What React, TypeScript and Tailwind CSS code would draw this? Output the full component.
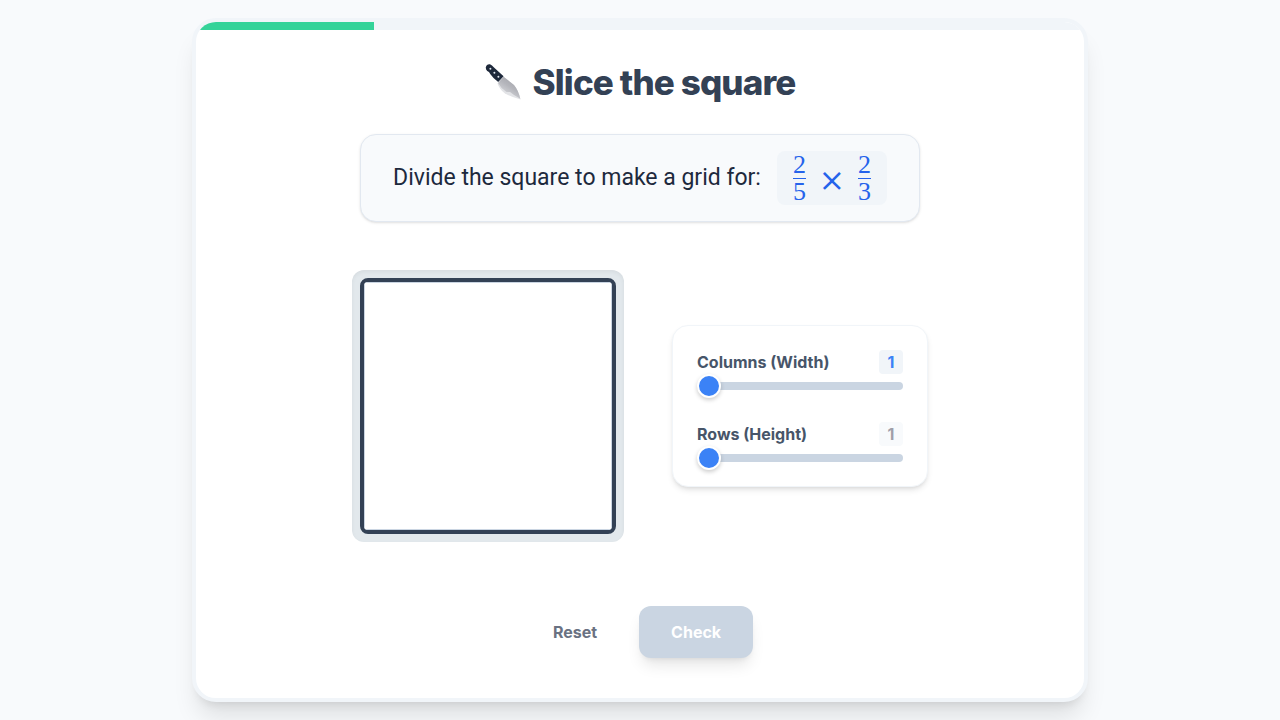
import { useState } from "react";

const KnifeIcon = () => (
  <svg className="h-9 w-9" viewBox="0 0 36 36" role="img" aria-label="Knife">
    <defs>
      <linearGradient id="blade" x1="0.2" y1="1" x2="0.8" y2="0.1">
        <stop offset="0.2" stopColor="#d3d4d8" />
        <stop offset="0.6" stopColor="#b4b5bb" />
        <stop offset="1" stopColor="#a3a4aa" />
      </linearGradient>
    </defs>
    <path d="M12.5 19.5 18.6 12.8 29 21Q33.5 26.5 35.6 35.4Q27 33.5 20 29.5Q14.5 25.5 12.5 19.5Z" fill="#e2e3e6" />
    <path d="M13 19 18.6 12.8 29 21Q33.5 26.5 35.3 34.8Q29 31.5 25 28L21.5 28Q16 24.5 13 19Z" fill="url(#blade)" />
    <path d="M.8 3.2Q1.6-.2 5 .2Q7 1.2 9 3.4L18.6 12.2 13.2 18Q8.6 14.8 5.4 10.2Q4.2 7.6 2.2 7Q.6 5.6.8 3.2Z" fill="#1e293b" />
    <circle cx="5.4" cy="4.8" r="1" fill="#e2e8f0" />
    <circle cx="9.4" cy="8.8" r="1" fill="#e2e8f0" />
    <circle cx="13.4" cy="12.8" r="1" fill="#e2e8f0" />
  </svg>
);

type FractionProps = { top: number; bottom: number };

const Fraction = ({ top, bottom }: FractionProps) => (
  <span className="flex w-[13px] flex-col items-center text-[26px] leading-[26px]">
    <span>{top}</span>
    <span className="h-px w-full bg-[#2563eb]" />
    <span>{bottom}</span>
  </span>
);

type SliderProps = {
  id: string;
  label: string;
  value: number;
  valueClass: string;
  onChange: (value: number) => void;
};

const Slider = ({ id, label, value, valueClass, onChange }: SliderProps) => (
  <div>
    <div className="mb-2 flex items-center justify-between font-bold text-[#475569]">
      <label htmlFor={id}>{label}</label>
      <output
        htmlFor={id}
        className={`min-w-6 rounded px-2 text-center ${valueClass}`}
      >
        {value}
      </output>
    </div>
    <input
      id={id}
      type="range"
      min={1}
      max={10}
      value={value}
      onChange={(e) => onChange(parseInt(e.target.value))}
      className="block h-2 w-full cursor-pointer appearance-none rounded-lg bg-slate-300 [&::-webkit-slider-thumb]:h-6 [&::-webkit-slider-thumb]:w-6 [&::-webkit-slider-thumb]:appearance-none [&::-webkit-slider-thumb]:rounded-full [&::-webkit-slider-thumb]:border-2 [&::-webkit-slider-thumb]:border-white [&::-webkit-slider-thumb]:bg-[#3b82f6] [&::-webkit-slider-thumb]:shadow-[0_2px_4px_rgba(0,0,0,0.2)]"
    />
  </div>
);

export default function App() {
  const [columns, setColumns] = useState(1);
  const [rows, setRows] = useState(1);

  const reset = () => {
    setColumns(1);
    setRows(1);
  };

  return (
    <div className="flex min-h-screen items-center justify-center bg-slate-50 px-4 font-['Inter',sans-serif] text-slate-800">
      <main className="w-full max-w-4xl overflow-hidden rounded-3xl border-4 border-slate-100 bg-white shadow-xl">
        <div className="h-2 bg-slate-100">
          <div className="h-full bg-[#34d399]" style={{ width: "20%" }} />
        </div>

        <div className="flex flex-col items-center px-10 pt-8 pb-10">
          <h1 className="mb-8 flex items-center gap-3 text-[35px] leading-10 font-extrabold tracking-tight text-[#334155]">
            <KnifeIcon />
            Slice the square
          </h1>

          <div className="mb-12 flex items-center gap-4 rounded-2xl border border-slate-200 bg-slate-50 px-8 py-4 text-[23px] shadow-sm">
            <span className="font-['Roboto',sans-serif]">
              Divide the square to make a grid for:
            </span>
            <span className="flex min-h-[54px] items-center gap-4 rounded-lg bg-slate-100 px-4 font-['Liberation_Serif',serif] text-[#2563eb]">
              <Fraction top={2} bottom={5} />
              <span className="flex w-5 justify-center font-['Inter',sans-serif] text-[40px] leading-none font-light">
                ×
              </span>
              <Fraction top={2} bottom={3} />
            </span>
          </div>

          <div className="mb-16 flex flex-wrap items-center justify-center gap-12">
            <div className="rounded-xl bg-[#e2e8ec] p-2 shadow-inner">
              <div
                className="grid h-64 w-64 overflow-hidden rounded-lg border-4 border-[#334155] bg-white"
                style={{
                  gridTemplateColumns: `repeat(${columns}, 1fr)`,
                  gridTemplateRows: `repeat(${rows}, 1fr)`,
                }}
              >
                {Array.from({ length: columns * rows }).map((_, index) => (
                  <div key={index} className="border border-slate-300" />
                ))}
              </div>
            </div>

            <div className="flex w-64 flex-col gap-8 rounded-2xl border border-slate-100 bg-white p-6 shadow-md">
              <Slider
                id="columns"
                label="Columns (Width)"
                value={columns}
                valueClass="bg-slate-100 text-[#3b82f6]"
                onChange={setColumns}
              />
              <Slider
                id="rows"
                label="Rows (Height)"
                value={rows}
                valueClass="bg-slate-50 text-zinc-400"
                onChange={setRows}
              />
            </div>
          </div>

          <div className="flex justify-center gap-4 font-bold">
            <button
              type="button"
              className="rounded-xl border-2 border-transparent px-6 py-3 text-gray-500"
              onClick={reset}
            >
              Reset
            </button>
            <button
              type="button"
              className="rounded-xl bg-slate-300 px-8 py-3 text-white shadow-lg"
              disabled
            >
              Check
            </button>
          </div>
        </div>
      </main>
    </div>
  );
}
